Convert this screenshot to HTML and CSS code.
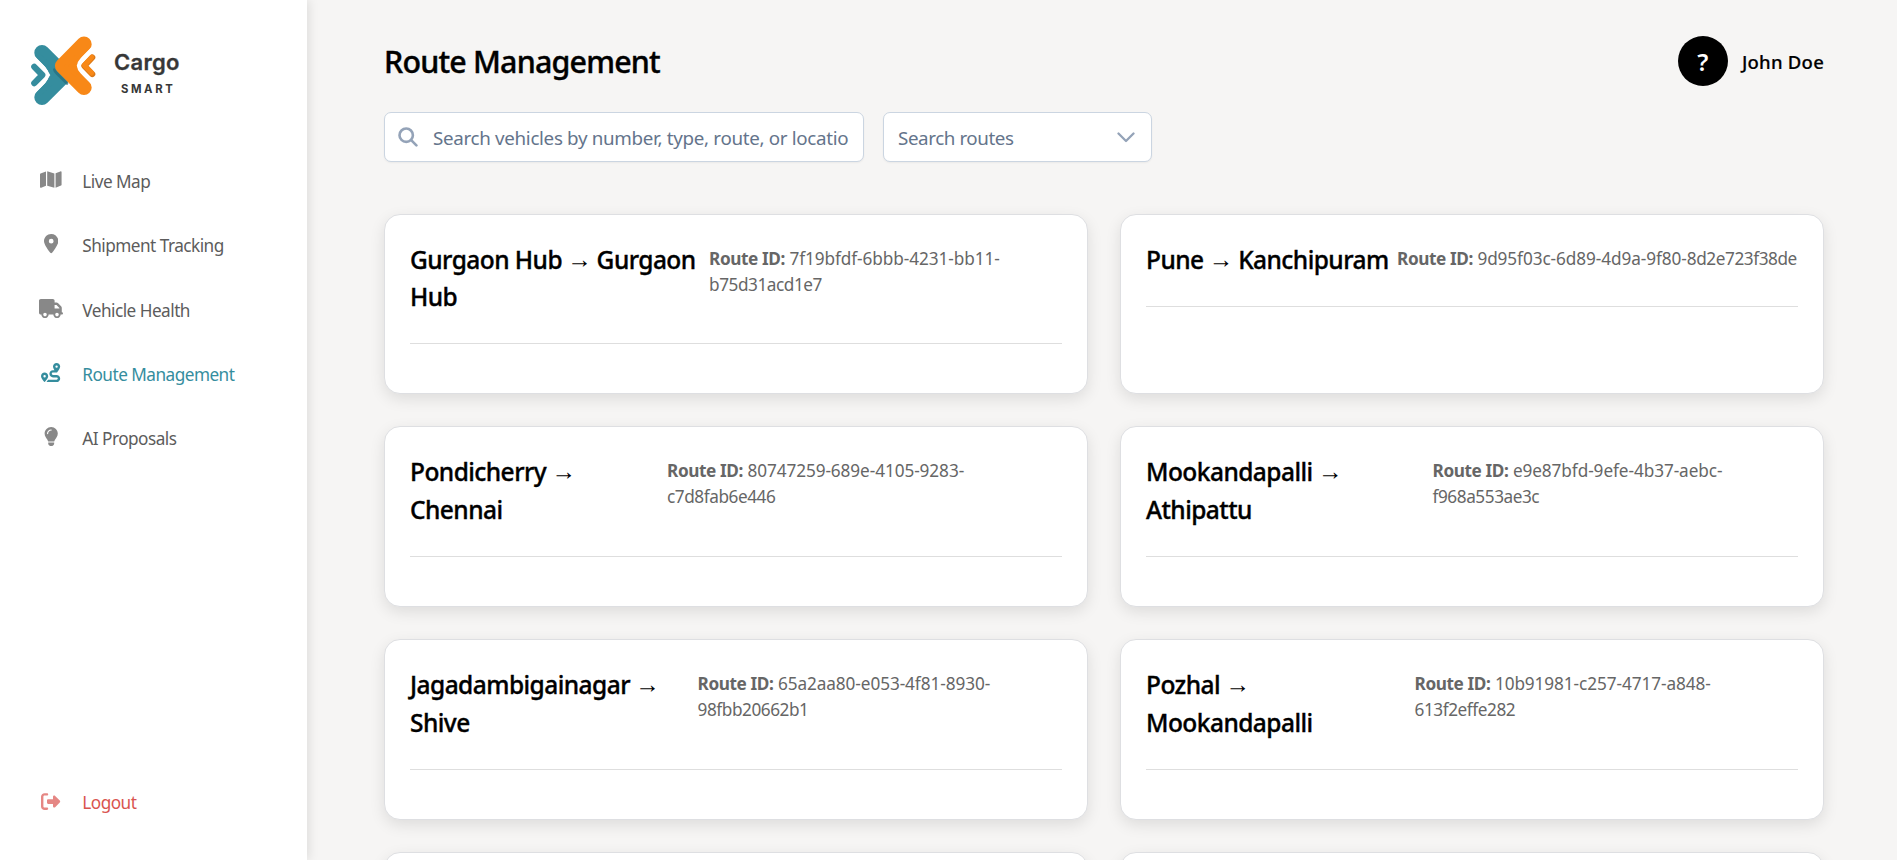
FILE: index.html
```html
<!DOCTYPE html>
<html lang="en">
<head>
<meta charset="utf-8">
<title>Route Management</title>
<link rel="stylesheet" href="styles.css">
</head>
<body>
<div class="app">
  <aside class="sidebar">
    <div class="brand">
      <svg class="brand-mark" viewBox="28 33 70 78" width="70" height="78" fill="none" stroke-linecap="round" stroke-linejoin="round">
        <g stroke="#358d9e">
          <path d="M42 52.7L64.3 75L42 97.3" stroke-width="15.4"/>
          <path d="M40 56L62 75L40 94L52 75Z" fill="#358d9e" stroke-width="3"/>
          <path d="M31 55.5L43.8 68.4Q49.8 75 43.8 81.6L31 94.5" stroke="#fff" stroke-width="4" stroke-linecap="butt"/>
          <path d="M34.3 66.8L42.3 75L34.3 83.2" stroke-width="6.2"/>
        </g>
        <path d="M54.3 69.5Q54.5 71 57 73.5L67 83.5" stroke="#276f7d" stroke-width="2.6" opacity=".75"/>
        <g stroke="#f88817">
          <path d="M84 44.2L62.6 65.8L84 87.4" stroke-width="15.4"/>
          <path d="M86 47L66 65.8L86 85L75 65.8Z" fill="#f88817" stroke-width="3"/>
          <path d="M96 45.5L82.2 59.4Q76 65.8 82.2 72.2L96 86" stroke="#fff" stroke-width="4" stroke-linecap="butt"/>
          <path d="M92.3 57.5L84.3 65.8L92.3 74.1" stroke="#d97818" stroke-width="6"/>
          <path d="M91.7 57.2L84.3 65.3L91.7 73" stroke-width="5"/>
        </g>
      </svg>
      <div class="brand-name">
        <span class="brand-title">Cargo</span>
        <span class="brand-sub">SMART</span>
      </div>
    </div>
    <nav class="nav">
      <a class="nav-item"><span class="nav-icon"><svg viewBox="0 0 576 512"><path d="M384 476.1L192 421.2V35.9L384 90.8V476.1zm32-1.2V88.4L543.1 37.5c15.8-6.3 32.9 5.3 32.9 22.3V394.6c0 9.8-6 18.6-15.1 22.3L416 474.8zM15.1 95.1L160 37.2V423.6L32.9 474.5C17.1 480.8 0 469.2 0 452.2V117.4c0-9.8 6-18.6 15.1-22.3z"/></svg></span>Live Map</a>
      <a class="nav-item"><span class="nav-icon"><svg viewBox="0 0 384 512"><path d="M215.7 499.2C267 435 384 279.4 384 192C384 86 298 0 192 0S0 86 0 192c0 87.4 117 243 168.3 307.2c12.3 15.3 35.1 15.3 47.4 0zM192 128a64 64 0 1 1 0 128 64 64 0 1 1 0-128z"/></svg></span>Shipment Tracking</a>
      <a class="nav-item"><span class="nav-icon"><svg viewBox="0 0 640 512"><path d="M48 0C21.5 0 0 21.5 0 48V368c0 26.5 21.5 48 48 48H64c0 53 43 96 96 96s96-43 96-96H384c0 53 43 96 96 96s96-43 96-96h32c17.7 0 32-14.3 32-32s-14.3-32-32-32V288 256 237.3c0-17-6.7-33.3-18.7-45.3L512 114.7c-12-12-28.3-18.7-45.3-18.7H416V48c0-26.5-21.5-48-48-48H48zM416 160h50.7L544 237.3V256H416V160zM112 416a48 48 0 1 1 96 0 48 48 0 1 1 -96 0zm368-48a48 48 0 1 1 0 96 48 48 0 1 1 0-96z"/></svg></span>Vehicle Health</a>
      <a class="nav-item nav-item--active"><span class="nav-icon"><svg viewBox="0 0 512 512"><path d="M512 96c0 50.2-59.1 125.1-84.6 155c-3.8 4.4-9.4 6.1-14.5 5H320c-17.7 0-32 14.3-32 32s14.3 32 32 32h96c53 0 96 43 96 96s-43 96-96 96H139.6c8.7-9.9 19.3-22.6 30-36.8c6.3-8.4 12.8-17.6 19-27.2H416c17.7 0 32-14.3 32-32s-14.3-32-32-32H320c-53 0-96-43-96-96s43-96 96-96h39.8c-21-31.5-39.8-67.7-39.8-96c0-53 43-96 96-96s96 43 96 96zM117.1 489.1c-3.8 4.3-7.2 8.1-10.1 11.3l-1.8 2-.2-.2c-6 4.6-14.6 4-20-1.8C59.8 473 0 402.5 0 352c0-53 43-96 96-96s96 43 96 96c0 30-21.1 67-43.5 97.9c-10.7 14.7-21.7 28-30.8 38.5l-.6 .7zM128 352a32 32 0 1 0 -64 0 32 32 0 1 0 64 0zM416 128a32 32 0 1 0 0-64 32 32 0 1 0 0 64z"/></svg></span>Route Management</a>
      <a class="nav-item"><span class="nav-icon"><svg viewBox="0 0 384 512"><path d="M272 384c9.6-31.9 29.5-59.1 49.2-86.2l0 0c5.2-7.1 10.4-14.2 15.4-21.4c19.8-28.5 31.4-63 31.4-100.3C368 78.8 289.2 0 192 0S16 78.8 16 176c0 37.3 11.6 71.9 31.4 100.3c5 7.2 10.2 14.3 15.4 21.4l0 0c19.8 27.1 39.7 54.4 49.2 86.2H272zM192 512c44.2 0 80-35.8 80-80V416H112v16c0 44.2 35.8 80 80 80zM112 176c0 8.8-7.2 16-16 16s-16-7.2-16-16c0-61.9 50.1-112 112-112c8.8 0 16 7.2 16 16s-7.2 16-16 16c-44.2 0-80 35.8-80 80z"/></svg></span>AI Proposals</a>
    </nav>
    <a class="nav-item nav-item--logout"><span class="nav-icon"><svg viewBox="0 0 512 512"><path d="M377.9 105.9L500.7 228.7c7.2 7.2 11.3 17.1 11.3 27.3s-4.1 20.1-11.3 27.3L377.9 406.1c-6.4 6.4-15 9.9-24 9.9c-18.7 0-33.9-15.2-33.9-33.9l0-62.1-128 0c-17.7 0-32-14.3-32-32l0-64c0-17.7 14.3-32 32-32l128 0 0-62.1c0-18.7 15.2-33.9 33.9-33.9c9 0 17.6 3.6 24 9.9zM160 96L96 96c-17.7 0-32 14.3-32 32l0 256c0 17.7 14.3 32 32 32l64 0c17.7 0 32 14.3 32 32s-14.3 32-32 32l-64 0c-53 0-96-43-96-96L0 128C0 75 43 32 96 32l64 0c17.7 0 32 14.3 32 32s-14.3 32-32 32z"/></svg></span>Logout</a>
  </aside>

  <main class="main">
    <header class="header">
      <h1 class="page-title">Route Management</h1>
      <div class="user">
        <span class="avatar">?</span>
        <span class="user-name">John Doe</span>
      </div>
    </header>

    <div class="filters">
      <div class="field field--search">
        <svg class="search-icon" viewBox="0 0 20 20" width="20" height="20" fill="none" stroke="#94a3b8" stroke-linecap="round" stroke-width="2.6"><circle cx="8.2" cy="8.2" r="6.7"/><path d="M13.2 13.2L18.4 18.4"/></svg>
        <span class="field-text">Search vehicles by number, type, route, or locatio</span>
      </div>
      <div class="field field--select">
        <span class="field-text">Search routes</span>
        <svg class="chevron" viewBox="0 0 18 11" width="18" height="11" fill="none" stroke="#94a3b8" stroke-width="2.3" stroke-linecap="round" stroke-linejoin="round"><path d="M1.5 1.5L9 9L16.5 1.5"/></svg>
      </div>
    </div>

    <section class="cards">
      <article class="card">
        <div class="card-head">
          <h2 class="card-title" style="width:299px">Gurgaon Hub <span class="arrow">→</span> Gurgaon<br>Hub</h2>
          <p class="route-id"><strong>Route ID:</strong> <span class="id-head">7f19bfdf-6bbb-4231-bb11-</span><br><span class="id-tail">b75d31acd1e7</span></p>
        </div>
      </article>
      <article class="card">
        <div class="card-head">
          <h2 class="card-title" style="width:251px">Pune <span class="arrow">→</span> Kanchipuram</h2>
          <p class="route-id"><strong>Route ID:</strong> <span class="id-head">9d95f03c-6d89-4d9a-9f80-</span><span class="id-tail">8d2e723f38de</span></p>
        </div>
      </article>
      <article class="card">
        <div class="card-head">
          <h2 class="card-title" style="width:257px">Pondicherry <span class="arrow">→</span><br>Chennai</h2>
          <p class="route-id"><strong>Route ID:</strong> <span class="id-head">80747259-689e-4105-9283-</span><br><span class="id-tail">c7d8fab6e446</span></p>
        </div>
      </article>
      <article class="card">
        <div class="card-head">
          <h2 class="card-title" style="width:286.5px">Mookandapalli <span class="arrow">→</span><br>Athipattu</h2>
          <p class="route-id"><strong>Route ID:</strong> <span class="id-head">e9e87bfd-9efe-4b37-aebc-</span><br><span class="id-tail">f968a553ae3c</span></p>
        </div>
      </article>
      <article class="card">
        <div class="card-head">
          <h2 class="card-title" style="width:287.5px">Jagadambigainagar <span class="arrow">→</span><br>Shive</h2>
          <p class="route-id"><strong>Route ID:</strong> <span class="id-head">65a2aa80-e053-4f81-8930-</span><br><span class="id-tail">98fbb20662b1</span></p>
        </div>
      </article>
      <article class="card">
        <div class="card-head">
          <h2 class="card-title" style="width:268.5px">Pozhal <span class="arrow">→</span><br>Mookandapalli</h2>
          <p class="route-id"><strong>Route ID:</strong> <span class="id-head">10b91981-c257-4717-a848-</span><br><span class="id-tail">613f2effe282</span></p>
        </div>
      </article>
      <article class="card"></article>
      <article class="card"></article>
    </section>
  </main>
</div>
</body>
</html>
```
FILE: styles.css
```css
* {
  box-sizing: border-box;
}

body {
  margin: 0;
  height: 860px;
  overflow: hidden;
  background: #f6f5f4;
  color: #000;
  font-family: "Noto Sans", sans-serif;
}

.app {
  display: flex;
  height: 860px;
}

/* Sidebar */
.sidebar {
  position: relative;
  z-index: 1;
  display: flex;
  flex-direction: column;
  width: 307px;
  flex: none;
  padding-bottom: 25px;
  background: #fff;
  box-shadow: 2px 0 10px rgba(0, 0, 0, 0.1);
}

.brand {
  display: flex;
  align-items: flex-start;
  gap: 16px;
  height: 149.5px;
  padding: 33px 0 0 28px;
}

.brand-name {
  display: flex;
  flex-direction: column;
  padding-top: 14px;
  color: #373737;
}

.brand-title {
  font: 600 22px/30px Inter, sans-serif;
  letter-spacing: 0.3px;
  -webkit-text-stroke: 0.3px;
}

.brand-sub {
  padding-left: 7px;
  font: 700 11.3px/24px Inter, sans-serif;
  letter-spacing: 2.6px;
}

.nav {
  display: flex;
  flex-direction: column;
  flex: 1;
}

.nav-item {
  display: flex;
  align-items: center;
  height: 64.3px;
  padding-left: 32px;
  color: #5c5c5c;
  font-size: 17.2px;
  letter-spacing: -0.52px;
}

.nav-icon {
  display: flex;
  justify-content: center;
  width: 38px;
  margin: -4px 12.3px 0 0;
  color: #888;
}

.nav-icon svg {
  height: 19.2px;
  fill: currentColor;
}

.nav-item--active,
.nav-item--active .nav-icon {
  color: #358d9e;
}

.nav-item--logout {
  color: #d9534f;
}

.nav-item--logout .nav-icon {
  margin-top: -3px;
  color: #e58784;
}

/* Content */
.main {
  flex: 1;
  overflow: hidden;
  padding: 36px 73px 0 77px;
}

.header {
  display: flex;
  justify-content: space-between;
  align-items: center;
  height: 50px;
}

.page-title {
  margin: 0;
  font-size: 30.4px;
  font-weight: 500;
  letter-spacing: -0.8px;
  -webkit-text-stroke: 0.4px;
}

.user {
  display: flex;
  align-items: center;
  gap: 14px;
}

.avatar {
  display: flex;
  align-items: center;
  justify-content: center;
  width: 50px;
  height: 50px;
  border-radius: 50%;
  background: #000;
  color: #fff;
  font-size: 24px;
  font-weight: 600;
}

.user-name {
  font-size: 18.5px;
  font-weight: 500;
  letter-spacing: 0.25px;
  -webkit-text-stroke: 0.2px;
}

.filters {
  display: flex;
  gap: 19px;
  margin-top: 26px;
}

.field {
  display: flex;
  align-items: center;
  height: 50px;
  border: 1px solid #cbd5e1;
  border-radius: 7px;
  background: #fff;
  box-shadow: 0 1px 2px rgba(18, 18, 23, 0.05);
  color: #64748b;
  font-size: 18.8px;
  letter-spacing: -0.32px;
  white-space: nowrap;
}

.field-text {
  padding-top: 2px;
}

.field--search {
  width: 480px;
  padding-left: 13px;
}

.search-icon {
  margin: -1px 15px 0 0;
}

.field--select {
  width: 269px;
  justify-content: space-between;
  padding: 0 16px 0 14px;
}

.field--select .field-text {
  letter-spacing: -0.42px;
}

.cards {
  display: grid;
  grid-template-columns: 1fr 1fr;
  grid-auto-rows: 180.8px;
  gap: 32px;
  margin-top: 51.7px;
}

.card {
  padding: 25px;
  border: 1px solid #dedfe2;
  border-radius: 16px;
  background: #fff;
  box-shadow: 0 5px 15px rgba(0, 0, 0, 0.1);
}

.card-head {
  display: flex;
  padding-bottom: 27.6px;
  border-bottom: 1px solid #dedede;
}

.card-title {
  flex: none;
  margin: 0;
  padding-top: 1px;
  font-size: 24.5px;
  font-weight: 500;
  line-height: 37.4px;
  letter-spacing: -0.55px;
  white-space: nowrap;
  -webkit-text-stroke: 0.35px;
}

.arrow {
  margin: 0 -0.5px;
  vertical-align: 1px;
  line-height: 1;
  -webkit-text-stroke: 0;
}

.route-id {
  height: 30px;
  margin: 6px 0 0;
  color: #666;
  font-size: 17.2px;
  line-height: 26px;
  white-space: nowrap;
}

.route-id strong {
  letter-spacing: -0.4px;
}

.id-head {
  letter-spacing: -0.08px;
}

.id-tail {
  letter-spacing: -0.44px;
}
```
